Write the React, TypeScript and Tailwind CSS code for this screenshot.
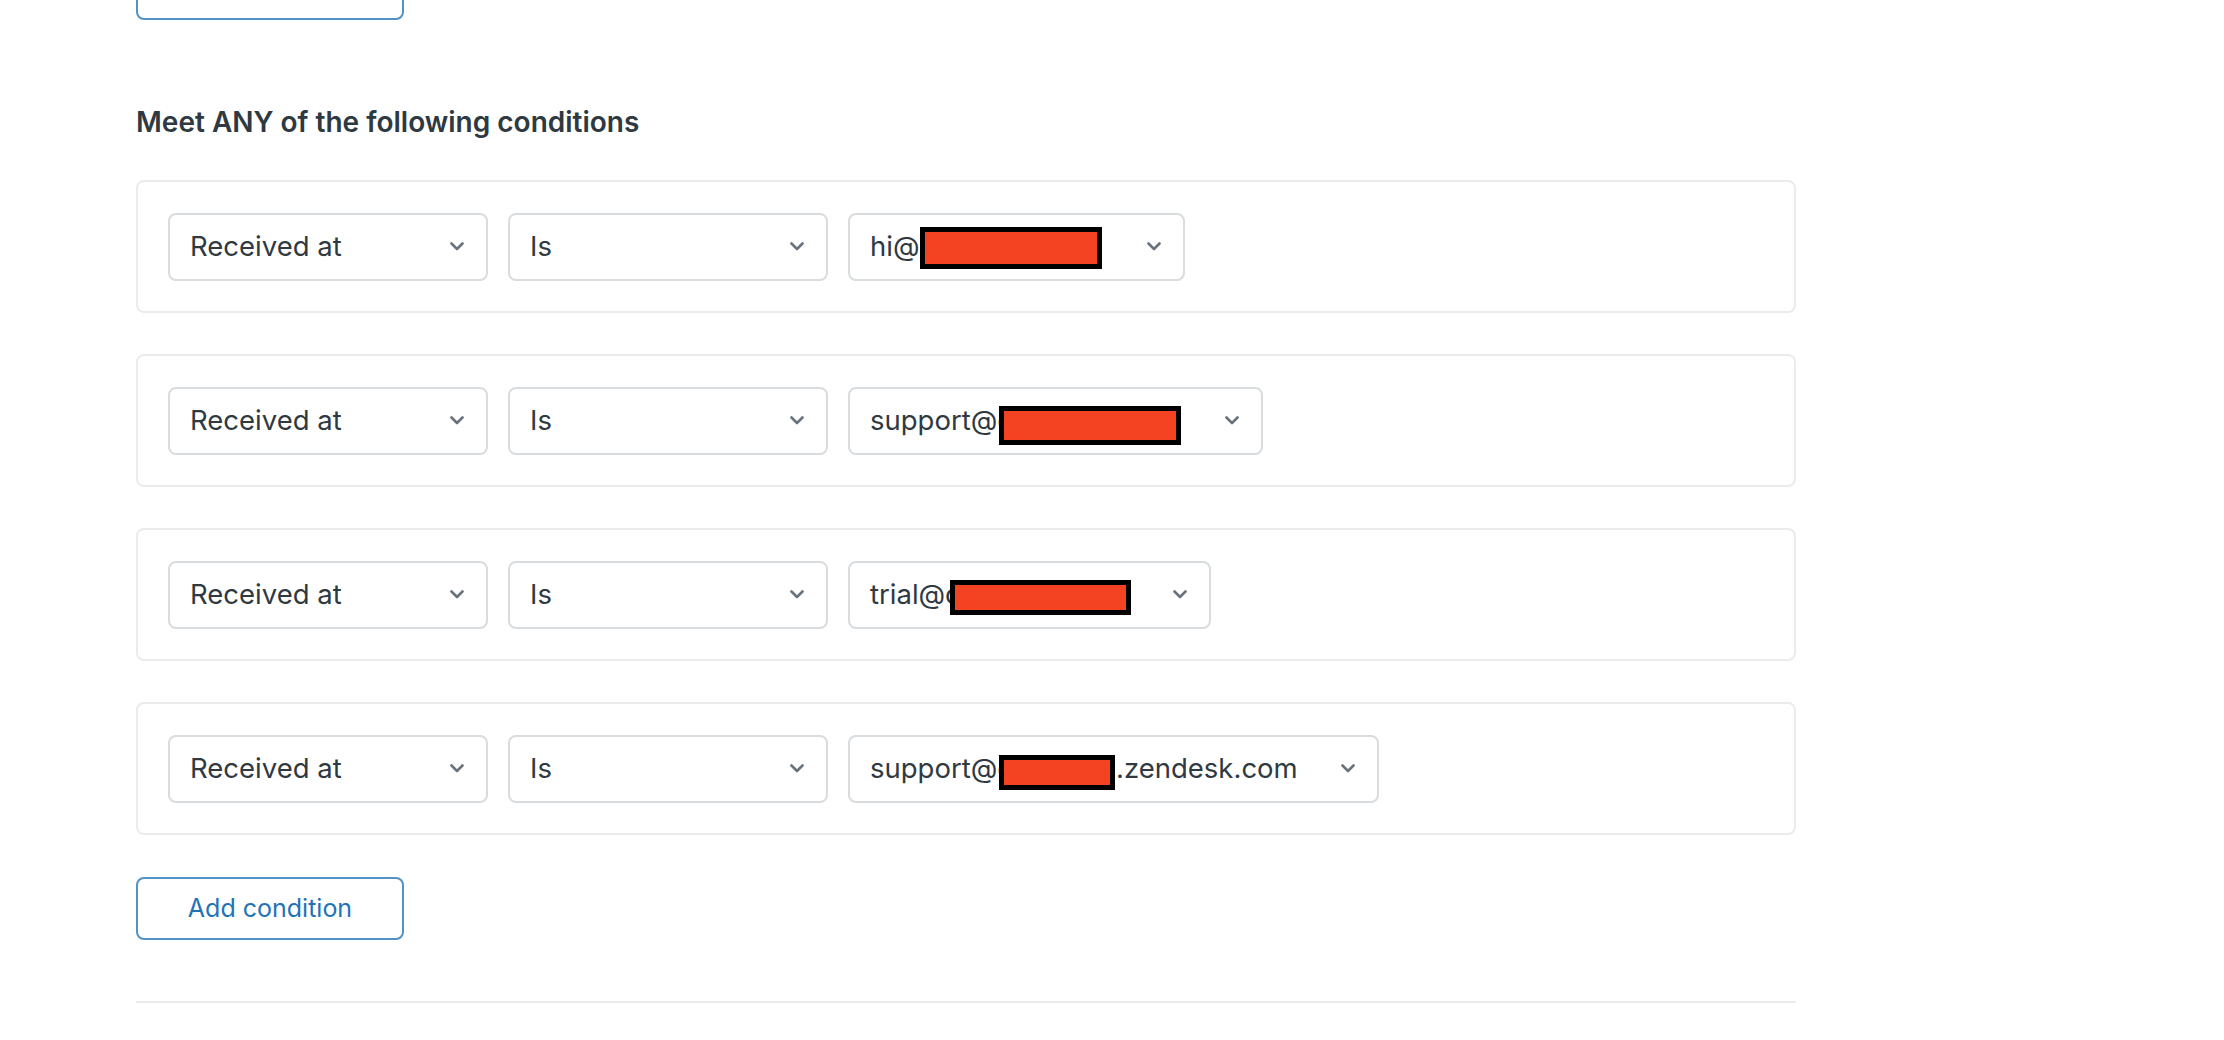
import React from "react";

type Redaction = { left: number; top: number; width: number; height: number };

type Condition = {
  value: string;
  valueWidth: number;
  redaction: Redaction;
  prefixWidth?: number;
  suffix?: string;
};

const CONDITIONS: Condition[] = [
  { value: "hi@c", valueWidth: 337, redaction: { left: 70, top: 14, width: 182, height: 42 } },
  { value: "support@c", valueWidth: 415, redaction: { left: 149, top: 19, width: 182, height: 39 } },
  { value: "trial@c", valueWidth: 363, redaction: { left: 100, top: 19, width: 181, height: 35 } },
  {
    value: "support@c",
    valueWidth: 531,
    redaction: { left: 149, top: 20, width: 116, height: 35 },
    prefixWidth: 246,
    suffix: ".zendesk.com",
  },
];

function Chevron() {
  return (
    <svg width="14" height="9" viewBox="0 0 14 9" fill="none" className="shrink-0">
      <path
        d="M1.5 1.5 L7 7 L12.5 1.5"
        stroke="#68737d"
        strokeWidth="2.6"
        strokeLinecap="round"
        strokeLinejoin="round"
      />
    </svg>
  );
}

function Select(props: { width: number; children: React.ReactNode; overlay?: React.ReactNode }) {
  return (
    <div
      className="relative flex h-[68px] shrink-0 items-center rounded-[8px] border-2 border-[#d8dcde] bg-white pl-[20px] pr-[22px] text-[27.5px] text-[#2f3941]"
      style={{ width: props.width }}
    >
      <div className="flex min-w-0 flex-1 items-center whitespace-nowrap">{props.children}</div>
      <Chevron />
      {props.overlay}
    </div>
  );
}

function ConditionRow(props: { condition: Condition }) {
  const c = props.condition;
  const r = c.redaction;
  return (
    <div className="flex h-[133px] items-center gap-[20px] rounded-[8px] border-2 border-[#e9ebed] bg-white px-[30px]">
      <Select width={320}>Received at</Select>
      <Select width={320}>Is</Select>
      <Select
        width={c.valueWidth}
        overlay={
          <div
            className="absolute border-[5px] border-black bg-[#f44323]"
            style={{ left: r.left, top: r.top - 2, width: r.width, height: r.height }}
          />
        }
      >
        {c.prefixWidth ? (
          <>
            <span className="shrink-0" style={{ width: c.prefixWidth }}>
              {c.value}
            </span>
            <span>{c.suffix}</span>
          </>
        ) : (
          <span>{c.value}</span>
        )}
      </Select>
    </div>
  );
}

export default function App() {
  return (
    <div className="min-h-screen bg-white font-['Inter',sans-serif]">
      <div className="ml-[136px] w-[1660px]">
        <button className="-mt-[43px] block h-[63px] w-[268px] rounded-[8px] border-2 border-[#5293c7] bg-white" />

        <h2 className="mt-[82px] text-[28px] leading-[40px] font-semibold text-[#2f3941]">
          Meet ANY of the following conditions
        </h2>

        <div className="mt-[38px] flex flex-col gap-[41px]">
          {CONDITIONS.map((c, i) => (
            <ConditionRow key={i} condition={c} />
          ))}
        </div>

        <button className="mt-[42px] flex h-[63px] w-[268px] items-center justify-center rounded-[8px] border-2 border-[#5293c7] bg-white text-[25px] text-[#1f73b7]">
          Add condition
        </button>

        <div className="mt-[61px] h-[2px] bg-[#e9ebed]" />
      </div>
    </div>
  );
}
